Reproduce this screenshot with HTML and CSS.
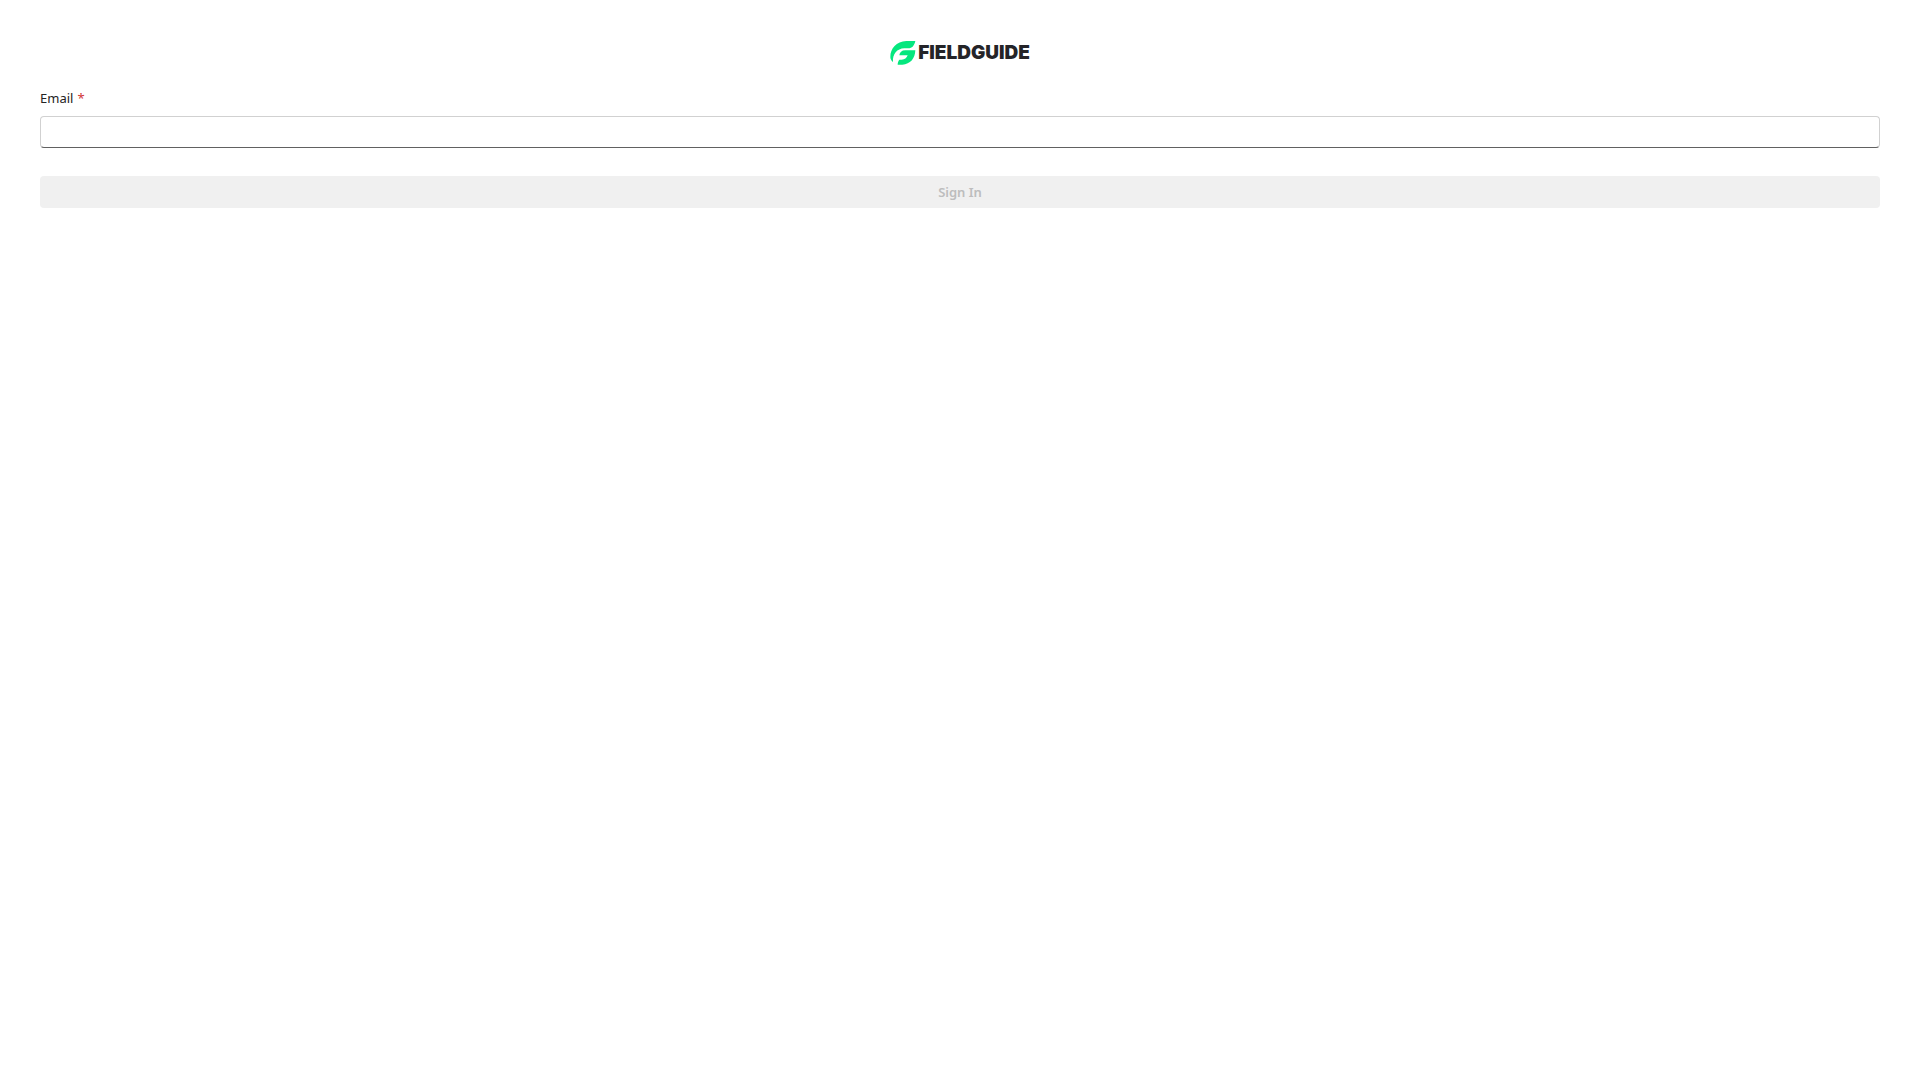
FILE: index.html
```html
<!doctype html>
<html lang="en">
<head>
  <meta charset="utf-8" />
  <title>Fieldguide</title>
  <link rel="stylesheet" href="styles.css">
</head>

<body>
  <main class="login">
    <div class="logo">
      <svg class="mark" viewBox="0 0 76 72" aria-hidden="true">
        <path d="M75 0 H48 C18 2 0 22 0 48 C0 54 3 59 8 63 C6 39 20 23 42 22 H54 C65 22 72 14 75 0 Z" />
        <path d="M75 28 H45 C34 28 28 34 27 43 H52 C49 51 43 56 34 56 H27 C24 60 22 65 22 71 H36 C60 70 74 53 75 28 Z" />
      </svg>
      <span class="wordmark">FIELDGUIDE</span>
    </div>
    <form action="index.html" method="get">
      <label for="email">Email<span class="required">*</span></label>
      <input type="email" id="email" name="email" required>
      <button disabled>Sign In</button>
    </form>
  </main>
</body>
</html>
```

FILE: styles.css
```css
body {
  margin: 0;
  background: #fff;
  color: #242424;
  font-family: "Noto Sans", sans-serif;
  font-size: 13px;
  line-height: 20px;
}
.login {
  padding: 40px;
}
.logo {
  display: flex;
  justify-content: center;
  align-items: center;
  gap: 2px;
  height: 26px;
  margin-bottom: 22px;
}
.mark {
  width: 26px;
  height: 24px;
  fill: #05e77e;
}
.wordmark {
  font-family: Inter, sans-serif;
  font-size: 19px;
  font-weight: 900;
  line-height: 24px;
  color: #242428;
}
form {
  display: flex;
  flex-direction: column;
}
label {
  margin-bottom: 8px;
}
.required {
  padding-left: 4px;
  color: #d13438;
}
input {
  box-sizing: border-box;
  height: 32px;
  padding: 0 12px;
  font: inherit;
  border: 1px solid #d1d1d1;
  border-bottom-color: #616161;
  border-radius: 4px;
}
button {
  height: 32px;
  margin-top: 28px;
  padding: 0;
  font: inherit;
  font-weight: 600;
  color: #bdbdbd;
  background: #f0f0f0;
  border: 0;
  border-radius: 4px;
}
```
